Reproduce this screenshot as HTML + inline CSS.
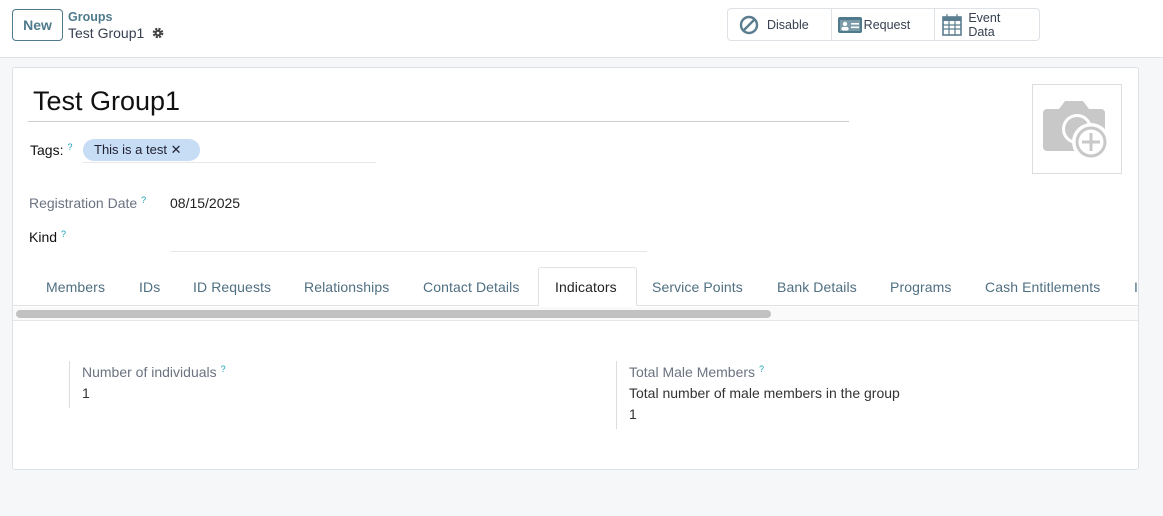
<!DOCTYPE html>
<html><head><meta charset="utf-8"><style>
*{box-sizing:border-box;margin:0;padding:0}
body{width:1163px;height:516px;background:#f6f7f9;font-family:"Liberation Sans",sans-serif;font-size:14px;color:#374151;position:relative;overflow:hidden}
.top{position:absolute;left:0;top:0;width:1163px;height:58px;background:#fff;border-bottom:1px solid #dee2e6}
.abs{position:absolute}
.new{left:12px;top:9px;width:51px;height:32px;border:1px solid #4f7a8c;border-radius:4px;color:#4f7a8c;font-size:14px;line-height:30px;text-align:center;font-weight:bold}
.btns{left:727px;top:8px;width:313px;height:33px;border:1px solid #dee2e6;border-radius:4px;display:flex;background:#fff}
.btns div{border-right:1px solid #dee2e6;display:flex;align-items:center;font-size:12.5px;color:#374151}
.card{left:12px;top:67px;width:1127px;height:403px;background:#fff;border:1px solid #dee2e6;border-radius:3px}
.q{color:#17a2b8;font-size:9px;vertical-align:top;margin-left:4px}
.tab{position:absolute;top:279px;color:#4f6f82;font-size:14px;letter-spacing:0.1px}
</style></head><body>
<div class="top"></div>
<div class="abs new">New</div>
<div class="abs" style="left:68px;top:10px;color:#4f7a8c;font-size:12.5px;font-weight:bold">Groups</div>
<div class="abs" style="left:68px;top:25px;font-size:14px;color:#374151">Test Group1 <svg width="12" height="12" viewBox="0 0 12 12" style="vertical-align:-1px;margin-left:4px"><circle cx="6" cy="6" r="4" fill="none" stroke="#444" stroke-width="2.6" stroke-dasharray="2 1.2"/><circle cx="6" cy="6" r="3.3" fill="#444"/><circle cx="6" cy="6" r="1.3" fill="#fff"/></svg></div>
<div class="abs btns">
<div style="width:104px;padding-left:11px"><svg width="20" height="20" viewBox="0 0 20 20"><circle cx="10" cy="10" r="8" fill="none" stroke="#5a7d8f" stroke-width="2.4"/><line x1="5" y1="15" x2="15" y2="5" stroke="#5a7d8f" stroke-width="2.4"/></svg><span style="margin-left:8px">Disable</span></div>
<div style="width:104px;padding-left:6px"><svg width="24" height="18" viewBox="0 0 24 18"><rect x="0" y="1" width="24" height="16" rx="2" fill="#4f7a8c"/><rect x="2" y="4" width="20" height="11" fill="#fff" opacity=".25"/><circle cx="7" cy="8" r="2.2" fill="#fff"/><rect x="3.5" y="11" width="7" height="3.5" rx="1.5" fill="#fff"/><rect x="13" y="7" width="8" height="1.6" fill="#fff"/><rect x="13" y="10.5" width="8" height="1.6" fill="#fff"/></svg><span style="margin-left:2px">Request</span></div>
<div style="width:104px;border-right:none;padding-left:7px"><svg width="20" height="22" viewBox="0 0 20 22"><rect x="1" y="3" width="18" height="18" fill="none" stroke="#5a7d8f" stroke-width="1.6"/><rect x="1" y="3" width="18" height="4" fill="#5a7d8f"/><path d="M5 0v5M15 0v5M1 11h18M1 15h18M7 7v14M13 7v14" stroke="#5a7d8f" stroke-width="1.2"/></svg><span style="margin-left:6px;line-height:14px">Event<br>Data</span></div>
</div>
<div class="abs card"></div>
<div class="abs" style="left:33px;top:86px;font-size:27px;color:#111">Test Group1</div>
<div class="abs" style="left:28px;top:121px;width:821px;border-top:1px solid #ccc"></div>
<div class="abs" style="left:1032px;top:84px;width:90px;height:90px;border:1px solid #ddd"><svg width="88" height="88" viewBox="0 0 88 88"><path d="M14 24h12l6-8h18l6 8h12a4 4 0 0 1 4 4v34a4 4 0 0 1-4 4H14a4 4 0 0 1-4-4V28a4 4 0 0 1 4-4z" fill="#c8c8c8"/><circle cx="44" cy="44" r="15" fill="#fff"/><circle cx="44" cy="44" r="12" fill="#c8c8c8"/><circle cx="58" cy="57" r="19" fill="#fff"/><circle cx="58" cy="57" r="15.5" fill="#c8c8c8"/><circle cx="58" cy="57" r="12.5" fill="#fff"/><path d="M58 48v18M49 57h18" stroke="#c8c8c8" stroke-width="3"/></svg></div>
<div class="abs" style="left:30px;top:142px;color:#111">Tags:<span class="q">?</span></div>
<div class="abs" style="left:83px;top:139px;width:117px;height:22px;background:#c7dcf5;border-radius:11px;color:#223;font-size:13px;line-height:22px;padding-left:11px">This is a test &#x2715;</div>
<div class="abs" style="left:83px;top:162px;width:293px;border-top:1px solid #e5e7eb"></div>
<div class="abs" style="left:29px;top:195px;color:#6b7280">Registration Date<span class="q">?</span></div>
<div class="abs" style="left:170px;top:195px;color:#222">08/15/2025</div>
<div class="abs" style="left:29px;top:229px;color:#111">Kind<span class="q">?</span></div>
<div class="abs" style="left:170px;top:251px;width:477px;border-top:1px solid #e5e7eb"></div>
<div class="abs" style="left:13px;top:305px;width:1125px;border-top:1px solid #dee2e6"></div>
<div class="abs" style="left:538px;top:267px;width:99px;height:39px;border:1px solid #dee2e6;border-bottom:1px solid #fff;background:#fff;border-radius:3px 3px 0 0"></div>
<span class="tab" style="left:46px">Members</span>
<span class="tab" style="left:139px">IDs</span>
<span class="tab" style="left:193px">ID Requests</span>
<span class="tab" style="left:304px">Relationships</span>
<span class="tab" style="left:423px">Contact Details</span>
<span class="tab" style="left:555px;color:#222">Indicators</span>
<span class="tab" style="left:652px">Service Points</span>
<span class="tab" style="left:777px">Bank Details</span>
<span class="tab" style="left:890px">Programs</span>
<span class="tab" style="left:985px">Cash Entitlements</span>
<span class="tab" style="left:1134px">I</span>
<div class="abs" style="left:13px;top:307px;width:1125px;height:14px;background:#fafafa;border-bottom:1px solid #e5e7eb"></div>
<div class="abs" style="left:16px;top:310px;width:755px;height:8px;background:#c1c1c1;border-radius:4px"></div>
<div class="abs" style="left:69px;top:361px;height:47px;border-left:1px solid #ddd"></div>
<div class="abs" style="left:82px;top:364px;color:#6b7280">Number of individuals<span class="q">?</span></div>
<div class="abs" style="left:82px;top:385px;color:#333">1</div>
<div class="abs" style="left:616px;top:361px;height:68px;border-left:1px solid #ddd"></div>
<div class="abs" style="left:629px;top:364px;color:#6b7280">Total Male Members<span class="q">?</span></div>
<div class="abs" style="left:629px;top:385px;color:#333">Total number of male members in the group</div>
<div class="abs" style="left:629px;top:406px;color:#333">1</div>
</body></html>
